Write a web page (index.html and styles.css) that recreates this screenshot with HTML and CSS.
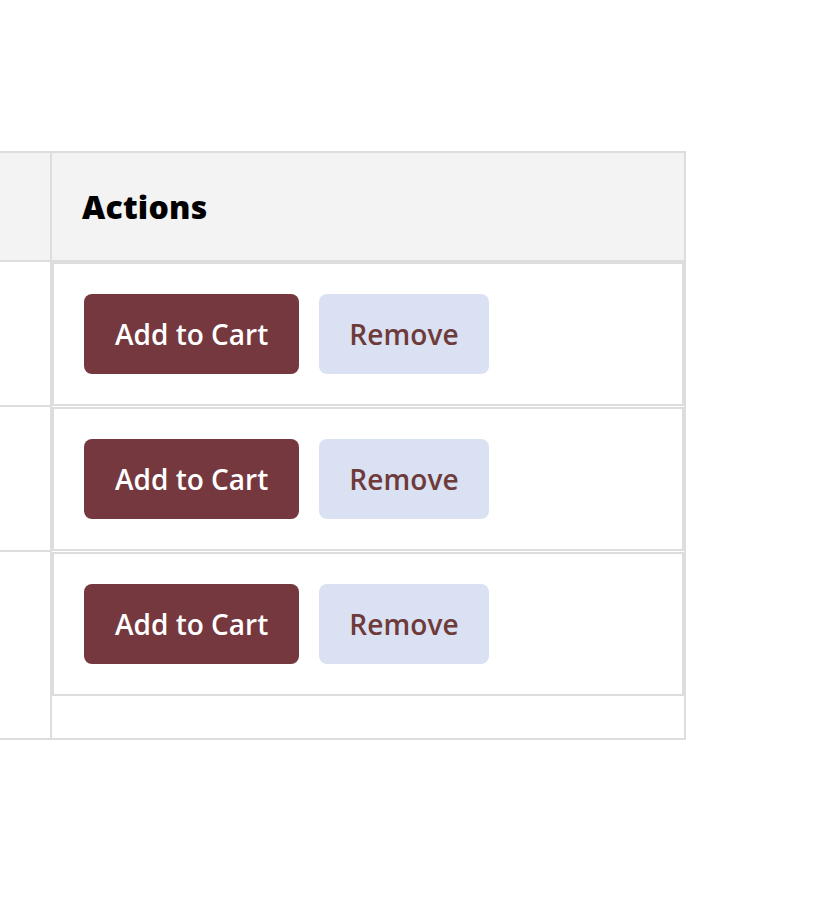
FILE: index.html
```html
<!DOCTYPE html>
<html lang="en">
<head>
<meta charset="utf-8">
<title>Cart actions</title>
<link rel="stylesheet" href="styles.css">
</head>
<body>
  <div class="table" role="table">
    <div class="row head" role="row">
      <div class="cell lead" role="columnheader"></div>
      <div class="cell actions-head" role="columnheader">Actions</div>
    </div>
    <div class="row" role="row">
      <div class="cell lead" role="cell"></div>
      <div class="cell action-cell" role="cell">
        <div class="action-box">
          <button class="btn btn-primary">Add to Cart</button>
          <button class="btn btn-secondary">Remove</button>
        </div>
      </div>
    </div>
    <div class="row" role="row">
      <div class="cell lead" role="cell"></div>
      <div class="cell action-cell" role="cell">
        <div class="action-box">
          <button class="btn btn-primary">Add to Cart</button>
          <button class="btn btn-secondary">Remove</button>
        </div>
      </div>
    </div>
    <div class="row last" role="row">
      <div class="cell lead" role="cell"></div>
      <div class="cell action-cell" role="cell">
        <div class="action-box">
          <button class="btn btn-primary">Add to Cart</button>
          <button class="btn btn-secondary">Remove</button>
        </div>
      </div>
    </div>
  </div>
</body>
</html>
```

FILE: styles.css
```css
* { box-sizing: border-box; }

html, body {
  margin: 0;
  padding: 0;
  background: #ffffff;
}

body {
  font-family: "Open Sans", "Noto Sans", sans-serif;
  padding-top: 151px;
}

.table {
  width: 686px;
  border-top: 2px solid #dddddd;
  border-right: 2px solid #dddddd;
  border-bottom: 2px solid #dddddd;
}

.row {
  display: grid;
  grid-template-columns: 52px 1fr;
}

.cell.lead {
  border-right: 2px solid #dddddd;
  border-bottom: 2px solid #dddddd;
  height: 145px;
}

.row.last .cell.lead {
  border-bottom: none;
  height: 186px;
}

.head .cell {
  background: #f3f3f3;
  height: 109px;
  border-bottom: 2px solid #dddddd;
}

.actions-head {
  display: flex;
  align-items: center;
  padding-left: 30px;
  font-weight: 800;
  font-size: 32px;
  color: #000000;
  letter-spacing: 0.2px;
}

.action-box {
  display: flex;
  gap: 20px;
  padding: 30px;
  border: 2px solid #dddddd;
}

.btn {
  height: 80px;
  padding: 0 31px;
  border: none;
  border-radius: 8px;
  font-family: "Open Sans", "Noto Sans", sans-serif;
  font-size: 28px;
  font-weight: 600;
  cursor: pointer;
}

.btn-primary {
  background: #75383e;
  color: #ffffff;
}

.btn-secondary {
  background: #d9e1f2;
  color: #6e3a3a;
  font-weight: 600;
  letter-spacing: 0.1px;
  padding: 0 30px;
}
```
